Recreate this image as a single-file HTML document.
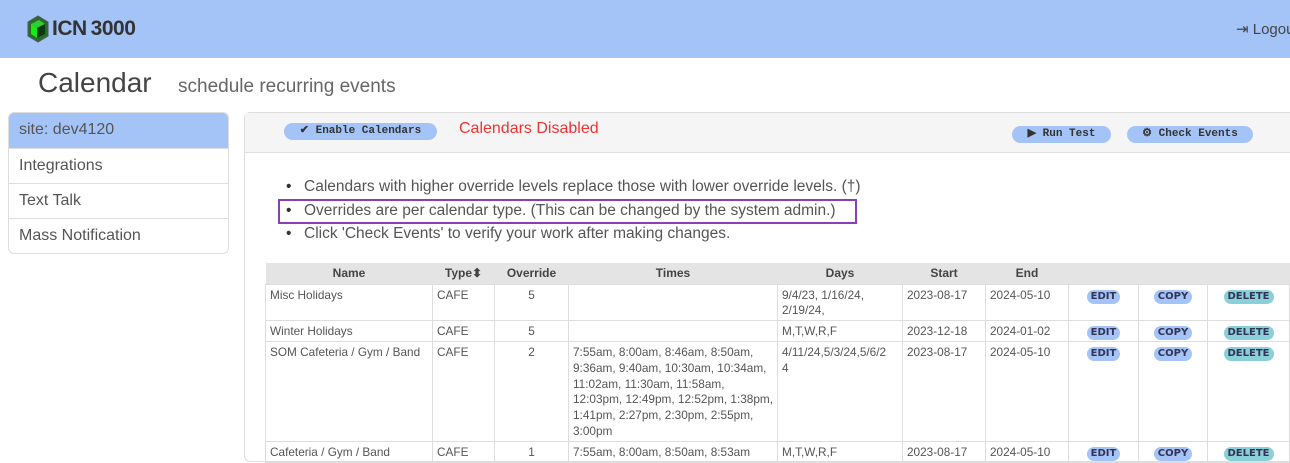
<!DOCTYPE html>
<html><head><meta charset="utf-8"><style>
*{box-sizing:border-box;margin:0;padding:0}
body{width:1290px;height:450px;overflow:hidden;background:#fff;font-family:"Liberation Sans",sans-serif;color:#555;position:relative}
.hdr{position:absolute;left:0;top:0;width:1290px;height:58px;background:#a4c4f8}
.logo{position:absolute;top:17px;font-size:21px;color:#333;letter-spacing:-0.5px;font-weight:bold}
.logout{position:absolute;left:1236px;top:20px;font-size:15px;color:#444;white-space:nowrap}
h1{position:absolute;left:38px;top:67px;font-size:28px;font-weight:normal;color:#444}
.sub{position:absolute;left:178px;top:76px;font-size:19px;color:#666}
.side{position:absolute;left:8px;top:112px;width:221px;border:1px solid #ddd;border-radius:6px;overflow:hidden}
.side div{height:35px;line-height:34px;padding-left:10px;font-size:16px;border-top:1px solid #ddd;color:#555}
.side div:first-child{background:#a4c4f8;border-top:0}
.panel{position:absolute;left:244px;top:112px;width:1060px;height:350px;border:1px solid #ddd;border-radius:6px}
.bar{height:40px;background:#f5f5f5;border-bottom:1px solid #ddd;position:relative}
.btn{position:absolute;height:17px;background:#a4c4f8;border-radius:9px;font-family:"Liberation Mono",monospace;font-size:11px;color:#333;line-height:17px;text-align:center;font-weight:bold}
.dis{position:absolute;left:214px;top:7px;color:#e33;font-size:16px}
ul{position:absolute;left:304px;top:175px;font-size:15.5px;line-height:23.5px;color:#555;list-style:none;white-space:nowrap}
ul li:before{content:"•";margin-left:-18px;width:18px;display:inline-block;color:#333}
.box{position:absolute;left:278px;top:199px;width:579px;height:25px;border:2px solid #8a3fb8}
table{position:absolute;left:265px;top:263px;border-collapse:collapse;font-size:11.8px;color:#555;table-layout:fixed;width:1024px}
th{background:#e4e4e4;height:21px;color:#444;font-size:12px}
td{border:1px solid #ddd;vertical-align:top;padding:3px 4px 1px;line-height:15.8px}
td.c{text-align:center}
.pl{display:inline-block;border-radius:8px;font-size:10px;font-weight:bold;padding:0 4px;line-height:14px;color:#335;font-family:"DejaVu Sans",sans-serif;margin-top:1px}
.e{background:#a4c4f8}.d{background:#8ad0d8}
</style></head><body>
<div class="hdr">
<svg style="position:absolute;left:26px;top:14px" width="24" height="30" viewBox="0 0 24 30"><polygon points="12,2 22,8 22,22 12,28 2,22 2,8" fill="#2a6a2a" stroke="#556" stroke-width="1"/><polygon points="5,10 13,6 19,10 11,14" fill="#3c3"/><polygon points="5,10 11,14 11,24 5,20" fill="#1e1"/><polygon points="11,14 19,10 19,20 11,24" fill="#0a3a0a"/></svg>
<div class="logo" style="left:52px">ICN<span style="margin-left:4px">3000</span></div>
<div class="logout">&#x21E5; Logout</div>
</div>
<h1>Calendar</h1><div class="sub">schedule recurring events</div>
<div class="side"><div>site: dev4120</div><div>Integrations</div><div>Text Talk</div><div>Mass Notification</div></div>
<div class="panel"><div class="bar">
<div class="btn" style="left:39px;top:10px;width:153px">✔ Enable Calendars</div>
<div class="dis">Calendars Disabled</div>
<div class="btn" style="left:767px;top:13px;width:99px">▶ Run Test</div>
<div class="btn" style="left:882px;top:13px;width:126px">⚙ Check Events</div>
</div></div>
<ul><li>Calendars with higher override levels replace those with lower override levels. (†)</li><li>Overrides are per calendar type. (This can be changed by the system admin.)</li><li>Click 'Check Events' to verify your work after making changes.</li></ul>
<div class="box"></div>
<table>
<colgroup><col style="width:167px"><col style="width:62px"><col style="width:74px"><col style="width:209px"><col style="width:125px"><col style="width:83px"><col style="width:83px"><col style="width:70px"><col style="width:69px"><col style="width:82px"></colgroup>
<tr><th>Name</th><th>Type⬍</th><th>Override</th><th>Times</th><th>Days</th><th>Start</th><th>End</th><th></th><th></th><th></th></tr>
<tr><td>Misc Holidays</td><td>CAFE</td><td class="c">5</td><td></td><td>9/4/23, 1/16/24,<br>2/19/24,</td><td>2023-08-17</td><td>2024-05-10</td><td class="c"><span class="pl e">EDIT</span></td><td class="c"><span class="pl e">COPY</span></td><td class="c"><span class="pl d">DELETE</span></td></tr>
<tr><td>Winter Holidays</td><td>CAFE</td><td class="c">5</td><td></td><td>M,T,W,R,F</td><td>2023-12-18</td><td>2024-01-02</td><td class="c"><span class="pl e">EDIT</span></td><td class="c"><span class="pl e">COPY</span></td><td class="c"><span class="pl d">DELETE</span></td></tr>
<tr><td style="white-space:nowrap">SOM Cafeteria / Gym / Band</td><td>CAFE</td><td class="c">2</td><td style="white-space:nowrap;overflow:hidden">7:55am, 8:00am, 8:46am, 8:50am,<br>9:36am, 9:40am, 10:30am, 10:34am,<br>11:02am, 11:30am, 11:58am,<br>12:03pm, 12:49pm, 12:52pm, 1:38pm,<br>1:41pm, 2:27pm, 2:30pm, 2:55pm,<br>3:00pm</td><td>4/11/24,5/3/24,5/6/2<br>4</td><td>2023-08-17</td><td>2024-05-10</td><td class="c"><span class="pl e">EDIT</span></td><td class="c"><span class="pl e">COPY</span></td><td class="c"><span class="pl d">DELETE</span></td></tr>
<tr><td>Cafeteria / Gym / Band</td><td>CAFE</td><td class="c">1</td><td>7:55am, 8:00am, 8:50am, 8:53am</td><td>M,T,W,R,F</td><td>2023-08-17</td><td>2024-05-10</td><td class="c"><span class="pl e">EDIT</span></td><td class="c"><span class="pl e">COPY</span></td><td class="c"><span class="pl d">DELETE</span></td></tr>
</table>
</body></html>
